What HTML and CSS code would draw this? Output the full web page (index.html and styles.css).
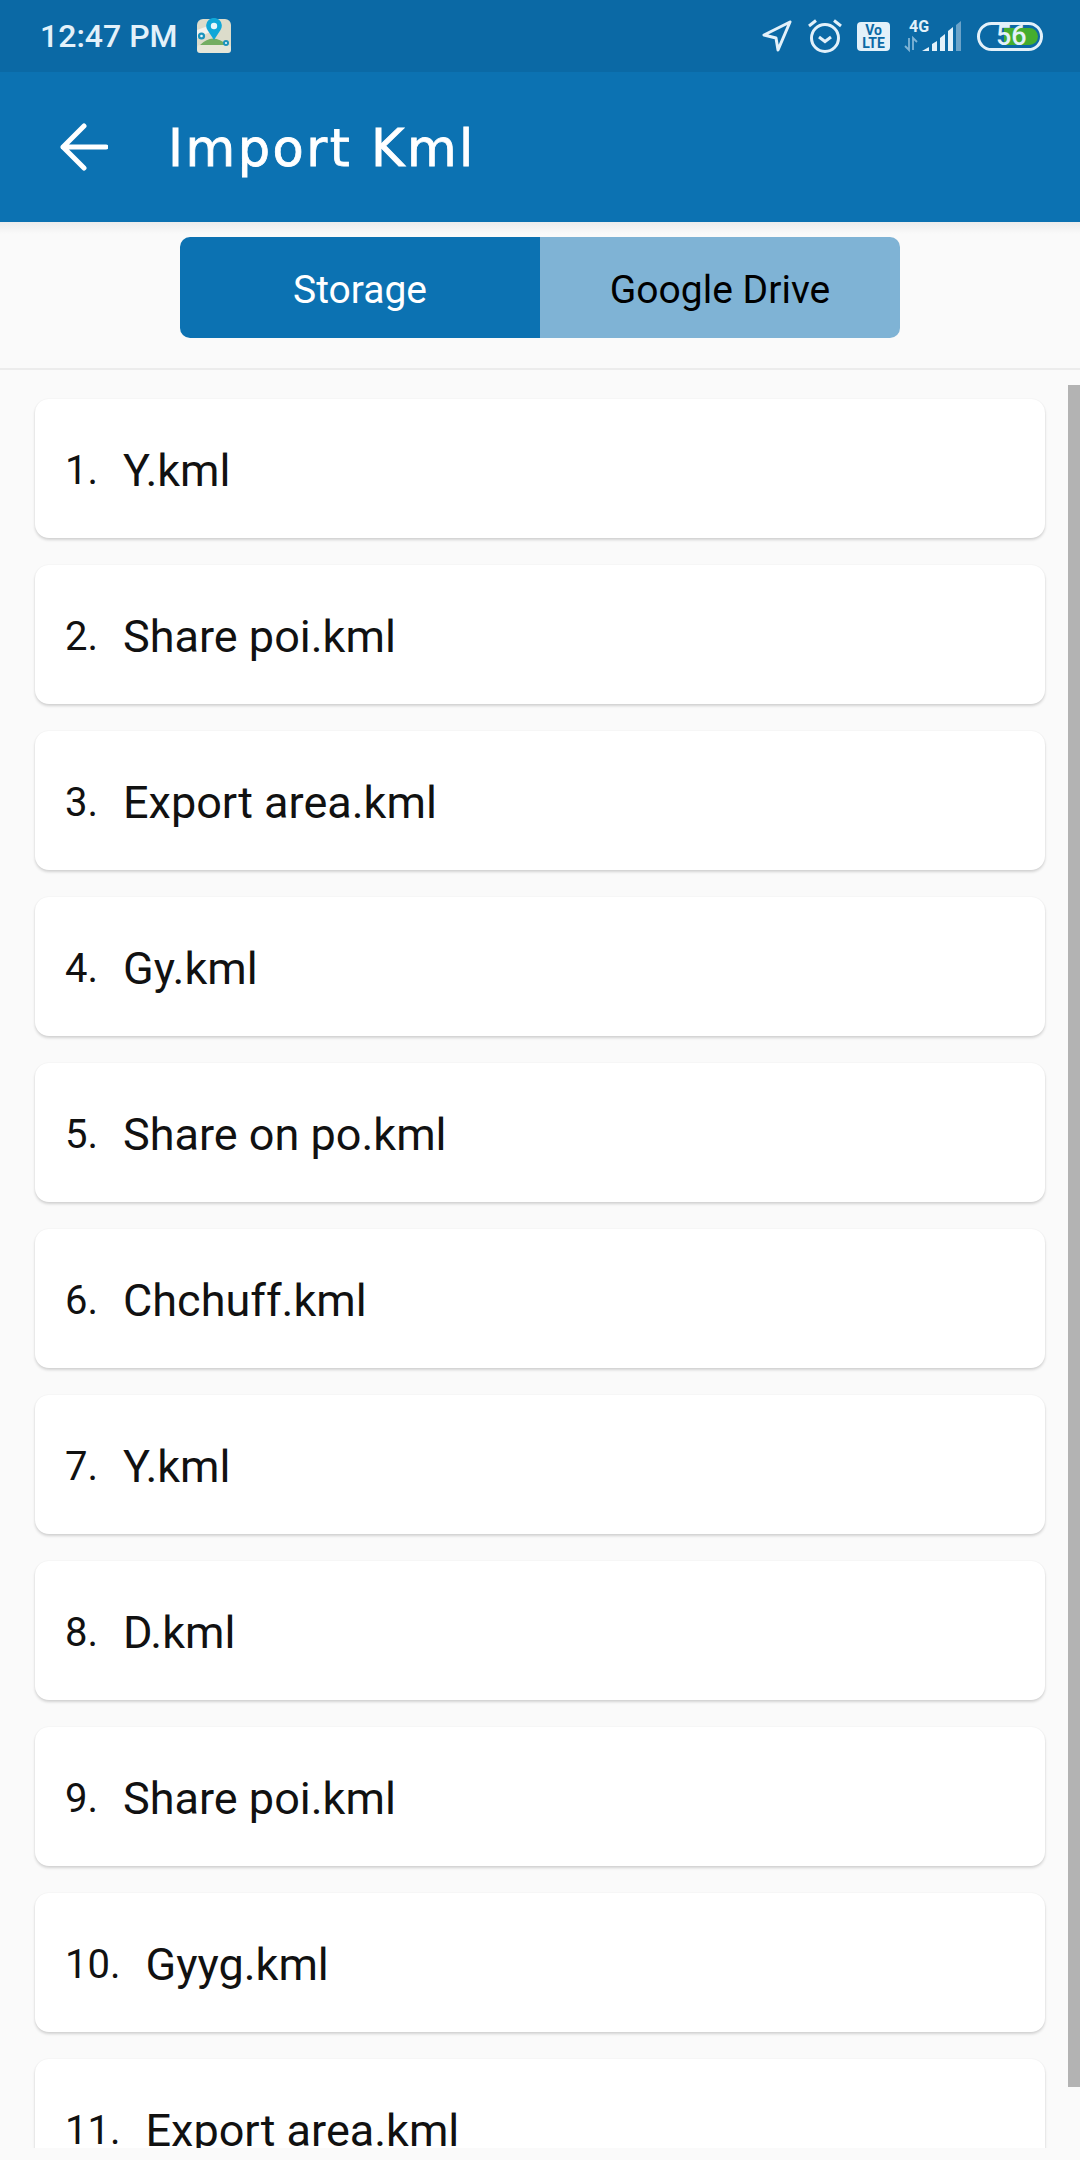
FILE: index.html
```html
<!DOCTYPE html>
<html lang="en">
	<head>
		<meta charset="UTF-8">
		<meta name="viewport" content="width=device-width, initial-scale=1.0">
		<title>Import Kml</title>
		<link rel="stylesheet" href="styles.css">
	</head>
	<body>

		<div class="status-bar">
			<span class="time">12:47 PM</span>
			<svg class="app-icon" width="36" height="36" viewBox="0 0 36 36">
				<rect x="1" y="1" width="34" height="34" rx="6" fill="#dcdccb"/>
				<path d="M1 12 L12 8 L14 14 L1 20Z" fill="#f1f2ee"/>
				<path d="M4 27 Q17 14 31 27Z" fill="#73ad62"/>
				<rect x="1" y="27" width="34" height="8" rx="3" fill="#e6e6d8"/>
				<path d="M18 22 L11.500 12 A7.800 7.800 0 1 1 24.500 12Z" fill="#10a7d8"/>
				<circle cx="18" cy="8" r="3.200" fill="#e8f6fb"/>
				<circle cx="5.500" cy="18" r="3.600" fill="#1a93bd"/>
				<circle cx="5.500" cy="18" r="1.300" fill="#e8f6fb"/>
				<circle cx="30" cy="25" r="3" fill="#1a93bd"/>
				<circle cx="30" cy="25" r="1.100" fill="#e8f6fb"/>
			</svg>
			<div class="status-icons">
				<svg class="nav-icon" width="30" height="32" viewBox="0 0 30 32">
					<path d="M28 2 L2 15 L14 18 L16 30Z" fill="none" stroke="#e3f1fa" stroke-width="3" stroke-linejoin="round"/>
				</svg>
				<svg class="alarm-icon" width="36" height="36" viewBox="0 0 36 36">
					<circle cx="18" cy="20" r="13.500" fill="none" stroke="#e3f1fa" stroke-width="3"/>
					<path d="M12 19 L18 23.500 L24 19" fill="none" stroke="#e3f1fa" stroke-width="3"/>
					<path d="M2 8 L9 2.500 M34 8 L27 2.500" fill="none" stroke="#e3f1fa" stroke-width="3"/>
				</svg>
				<svg class="volte-icon" width="33" height="29" viewBox="0 0 33 29">
					<rect width="33" height="29" rx="4" fill="#e3f1fa"/>
					<text x="16.500" y="13" class="volte-text" text-anchor="middle">Vo</text>
					<text x="16.500" y="26" class="volte-text" text-anchor="middle">LTE</text>
				</svg>
				<svg class="signal-icon" width="58" height="40" viewBox="0 -4 58 40">
					<text x="5" y="12" class="net-text">4G</text>
					<path d="M5 18 V30 L1 26 M9 30 V18 L13 22" fill="none" stroke="#7fb4d6" stroke-width="1.800"/>
					<path d="M18 31 L25 27 V31Z M28 24 L33 21 V31 H28Z M36 18 L41 14 V31 H36Z M44 11 L49 7 V31 H44Z" fill="#e3f1fa"/>
					<path d="M52 5 L57 1 V31 H52Z" fill="#6ba3c9"/>
				</svg>
				<div class="battery">
					<div class="battery-fill"></div>
					<span class="battery-num">56</span>
				</div>
			</div>
		</div>

		<div class="toolbar">
			<svg class="back-icon" width="48" height="48" viewBox="0 0 48 48">
				<path d="M46 24 H3 M24 3 L3 24 L24 45" fill="none" stroke="#fff" stroke-width="5" stroke-linecap="round" stroke-linejoin="round"/>
			</svg>
			<h1>Import Kml</h1>
		</div>

		<div class="tab-bar">
			<div class="tabs">
				<span class="tab active">Storage</span>
				<span class="tab">Google Drive</span>
			</div>
		</div>

		<div class="list-wrap">
			<div class="file-list">
				<div class="file-row"><span class="num">1.</span><span class="name">Y.kml</span></div>
				<div class="file-row"><span class="num">2.</span><span class="name">Share poi.kml</span></div>
				<div class="file-row"><span class="num">3.</span><span class="name">Export area.kml</span></div>
				<div class="file-row"><span class="num">4.</span><span class="name">Gy.kml</span></div>
				<div class="file-row"><span class="num">5.</span><span class="name">Share on po.kml</span></div>
				<div class="file-row"><span class="num">6.</span><span class="name">Chchuff.kml</span></div>
				<div class="file-row"><span class="num">7.</span><span class="name">Y.kml</span></div>
				<div class="file-row"><span class="num">8.</span><span class="name">D.kml</span></div>
				<div class="file-row"><span class="num">9.</span><span class="name">Share poi.kml</span></div>
				<div class="file-row"><span class="num">10.</span><span class="name">Gyyg.kml</span></div>
				<div class="file-row"><span class="num">11.</span><span class="name">Export area.kml</span></div>
			</div>
			<div class="scrollbar"></div>
		</div>

	</body>
</html>
```

FILE: styles.css
```css
* {
	box-sizing: border-box;
	margin: 0;
	padding: 0;
	font-family: 'Roboto', sans-serif;
}
body {
	background-color: #fafafa;
	width: 1080px;
	height: 2160px;
	overflow: hidden;
}

.status-bar {
	display: flex;
	align-items: center;
	height: 72px;
	padding: 0 37px 0 40px;
	background-color: #0b69a5;
	color: #e3f1fa;
}
.time {
	font-size: 32px;
	font-weight: 500;
}
.app-icon {
	margin-left: 18px;
}
.status-icons {
	display: flex;
	align-items: center;
	margin-left: auto;
}
.nav-icon {
	margin-right: 15px;
}
.alarm-icon {
	margin-right: 14px;
}
.volte-icon {
	margin-right: 14px;
}
.volte-text {
	font-family: 'Roboto', sans-serif;
	font-size: 14px;
	font-weight: 700;
	fill: #0b69a5;
}
.signal-icon {
	margin-right: 15px;
}
.net-text {
	font-family: 'Roboto', sans-serif;
	font-size: 16px;
	font-weight: 700;
	fill: #e3f1fa;
}
.battery {
	position: relative;
	width: 66px;
	height: 29px;
	border: 3px solid #e3f1fa;
	border-radius: 15px;
}
.battery-fill {
	position: absolute;
	top: 3px;
	left: 24px;
	width: 34px;
	height: 17px;
	border-radius: 0 9px 9px 0;
	background-color: #45ad2e;
}
.battery-num {
	position: absolute;
	top: -4px;
	left: 16px;
	font-size: 27px;
	font-weight: 500;
	line-height: 30px;
	color: #e3f1fa;
}

.toolbar {
	display: flex;
	align-items: center;
	height: 150px;
	padding-left: 60px;
	background-color: #0c72b2;
}
.back-icon {
	margin-right: 60px;
}
h1 {
	padding-top: 3px;
	font-family: 'DejaVu Sans', sans-serif;
	font-size: 51px;
	font-weight: 400;
	letter-spacing: 2.500px;
	-webkit-text-stroke: 0.8px #fff;
	color: #fff;
}

.tab-bar {
	display: flex;
	justify-content: center;
	height: 148px;
	padding-top: 15px;
	border-bottom: 2px solid #ececec;
	background: linear-gradient(#ececec, #fafafa 12px);
}
.tabs {
	display: flex;
	width: 720px;
	height: 101px;
	border-radius: 10px;
	overflow: hidden;
}
.tab {
	display: flex;
	flex: 1;
	justify-content: center;
	align-items: center;
	padding-top: 5px;
	font-size: 39px;
	background-color: #7fb3d5;
	color: #000;
}
.tab.active {
	background-color: #0c72b2;
	color: #fff;
}

.list-wrap {
	position: relative;
	height: 1778px;
	overflow: hidden;
}
.file-list {
	display: flex;
	flex-direction: column;
	gap: 27px;
	padding: 29px 35px 0;
}
.file-row {
	display: flex;
	flex-shrink: 0;
	align-items: center;
	height: 139px;
	padding: 3px 0 0 30px;
	background-color: #fff;
	border-radius: 14px;
	box-shadow: 0 2px 3px rgba(0, 0, 0, 0.16), 0 0 2px rgba(0, 0, 0, 0.05);
	color: #111;
}
.num {
	margin-right: 25px;
	font-size: 40px;
}
.name {
	font-size: 45px;
}
.scrollbar {
	position: absolute;
	top: 15px;
	right: 0;
	width: 12px;
	height: 1702px;
	background-color: #b3b3b3;
}
```
